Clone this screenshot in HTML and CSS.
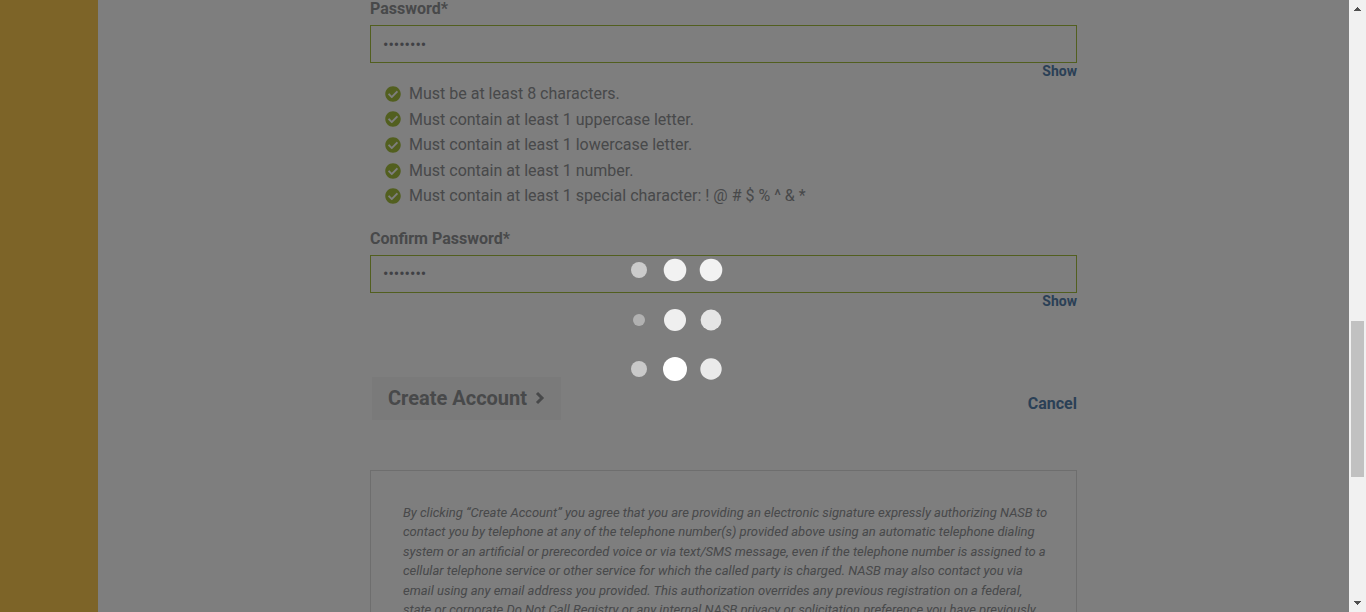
FILE: index.html
```html
<!DOCTYPE html>
<html lang="en">
<head>
<meta charset="utf-8">
<title>Create Account</title>
<link rel="stylesheet" href="styles.css">
</head>
<body>
<svg class="defs" aria-hidden="true">
  <symbol id="check" viewBox="0 0 512 512"><path d="M504 256c0 137-111 248-248 248S8 393 8 256 119 8 256 8s248 111 248 248zM227.300 387.300l184-184c6.200-6.200 6.200-16.400 0-22.600l-22.600-22.600c-6.200-6.200-16.400-6.200-22.600 0L216 308.100l-70.100-70.100c-6.200-6.200-16.400-6.200-22.600 0l-22.600 22.600c-6.200 6.200-6.200 16.400 0 22.600l104 104c6.200 6.300 16.400 6.300 22.600.1z"/></symbol>
</svg>
<div class="page">
  <aside class="side"></aside>
  <main class="main">
    <form class="form">
      <div class="field">
        <label class="label" for="password">Password*</label>
        <input class="input" id="password" type="password" value="Passw0rd">
        <a class="show" href="#password">Show</a>
      </div>
      <ul class="rules">
        <li class="rule"><svg class="check"><use href="#check"/></svg>Must be at least 8 characters.</li>
        <li class="rule"><svg class="check"><use href="#check"/></svg>Must contain at least 1 uppercase letter.</li>
        <li class="rule"><svg class="check"><use href="#check"/></svg>Must contain at least 1 lowercase letter.</li>
        <li class="rule"><svg class="check"><use href="#check"/></svg>Must contain at least 1 number.</li>
        <li class="rule"><svg class="check"><use href="#check"/></svg>Must contain at least 1 special character: ! @ # $ % ^ &amp; *</li>
      </ul>
      <div class="field">
        <label class="label" for="confirm">Confirm Password*</label>
        <input class="input" id="confirm" type="password" value="Passw0rd">
        <a class="show" href="#confirm">Show</a>
      </div>
      <div class="actions">
        <button class="create" type="button">Create Account
          <svg class="chevron" viewBox="0 0 10 14" aria-hidden="true"><path d="M2 2l5 5-5 5"/></svg>
        </button>
        <a class="cancel" href="#">Cancel</a>
      </div>
      <p class="legal">By clicking “Create Account” you agree that you are providing an electronic signature expressly authorizing NASB to contact you by telephone at any of the telephone number(s) provided above using an automatic telephone dialing system or an artificial or prerecorded voice or via text/SMS message, even if the telephone number is assigned to a cellular telephone service or other service for which the called party is charged. NASB may also contact you via email using any email address you provided. This authorization overrides any previous registration on a federal, state or corporate Do Not Call Registry or any internal NASB privacy or solicitation preference you have previously</p>
    </form>
  </main>
  <div class="overlay">
    <svg class="loader" viewBox="0 0 94 124" role="img" aria-label="Loading">
      <g fill="#fff">
        <circle cx="9" cy="13" r="8" opacity=".6"/>
        <circle cx="45" cy="13" r="11.300" opacity=".9"/>
        <circle cx="81" cy="13" r="11.300" opacity=".9"/>
        <circle cx="9" cy="63" r="6" opacity=".4"/>
        <circle cx="45" cy="63" r="11" opacity=".88"/>
        <circle cx="81" cy="63" r="10.400" opacity=".8"/>
        <circle cx="9" cy="112" r="8" opacity=".58"/>
        <circle cx="45" cy="112" r="12"/>
        <circle cx="81" cy="112" r="10.700" opacity=".84"/>
      </g>
    </svg>
  </div>
</div>
<div class="scrollbar" aria-hidden="true">
  <svg class="arrow" viewBox="0 0 7 4" shape-rendering="crispEdges"><path d="M3 0h1v1h1v1h1v1h1v1H0V3h1V2h1V1h1z"/></svg>
  <div class="track"><div class="thumb"></div></div>
  <svg class="arrow" viewBox="0 0 7 4" shape-rendering="crispEdges"><path d="M0 0h7v1H6v1H5v1H4v1H3V3H2V2H1V1H0z"/></svg>
</div>
</body>
</html>
```

FILE: styles.css
```css
* { box-sizing: border-box; }

body {
  display: flex;
  height: 100vh;
  margin: 0;
  overflow: hidden;
  background: #fcfcfc;
  color: #909295;
  font-family: Roboto, Arial, sans-serif;
  font-size: 16px;
}

a { color: #5580ac; font-weight: 700; text-decoration: none; }

.defs { position: absolute; width: 0; height: 0; }

.page {
  position: relative;
  display: flex;
  flex: 1;
  min-width: 0;
  overflow: hidden;
}

.side { flex: none; width: 98px; background: #fac950; }

.main { flex: 1; min-width: 0; }

.form { max-width: 707px; margin: 0 auto; }

.field { display: flex; flex-direction: column; }

.label { line-height: 18px; font-weight: 700; margin-bottom: 7px; }

.input {
  width: 100%;
  height: 38px;
  padding: 6px 12px;
  border: 1px solid #a5be3e;
  border-radius: 0;
  background: transparent;
  color: #80828a;
  font: 16px Roboto, Arial, sans-serif;
}

.show { align-self: flex-end; font-size: 14px; line-height: 16px; }

.rules {
  margin: 2px 0 21px;
  padding: 0 0 0 15px;
  list-style: none;
  line-height: 1.6;
}

.rule { display: flex; align-items: center; gap: 8px; }

.check { flex: none; width: 16px; height: 16px; fill: #a5be3e; }

.actions {
  display: flex;
  align-items: center;
  justify-content: space-between;
  margin: 68px 0 50px;
  padding-left: 2px;
}

.create {
  display: flex;
  align-items: center;
  gap: 8px;
  height: 43px;
  padding: 0 16px;
  border: 0;
  background: #f4f4f4;
  color: inherit;
  font: 700 20px Roboto, Arial, sans-serif;
}

.chevron { width: 10px; height: 14px; fill: none; stroke: currentColor; stroke-width: 3; }

.cancel { line-height: 20px; padding-top: 12px; }

.legal {
  margin: 0;
  padding: 32px 28px 32px 32px;
  border: 1px solid #dcdcdc;
  font-size: 13px;
  font-style: italic;
  line-height: 1.5;
}

.overlay {
  position: absolute;
  inset: 0;
  display: flex;
  align-items: center;
  justify-content: center;
  padding: 26px 0 0 4px;
  background: rgba(0, 0, 0, .5);
}

.loader { width: 94px; height: 124px; }

.scrollbar {
  display: flex;
  flex-direction: column;
  align-items: center;
  flex: none;
  width: 17px;
  padding: 7px 0;
  background: #f1f1f1;
}

.arrow { flex: none; width: 7px; height: 4px; fill: #505050; }

.track { flex: 1; width: 13px; padding: 310px 0 0; }

.thumb { height: 156px; background: #c1c1c1; }
```
